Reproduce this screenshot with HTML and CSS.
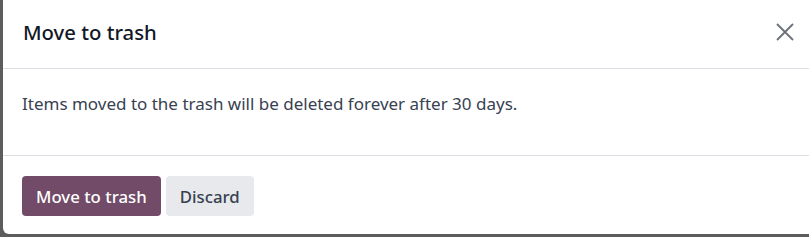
FILE: index.html
```html
<!DOCTYPE html>
<html lang="en">
<head>
    <meta charset="UTF-8">
    <meta name="viewport" content="width=device-width, initial-scale=1.0">
    <title>Move to trash</title>
    <link rel="stylesheet" href="styles.css">
</head>
<body>
    <div class="modal">
        <div class="modal-header">
            <h4 class="modal-title">Move to trash</h4>
            <button class="btn-close" aria-label="Close">
                <svg width="20" height="20" viewBox="0 0 20 20">
                    <path d="M2 2 L18 18 M18 2 L2 18" stroke="#6b6f78" stroke-width="1.8" fill="none"/>
                </svg>
            </button>
        </div>
        <div class="modal-body">
            <p>Items moved to the trash will be deleted forever after 30 days.</p>
        </div>
        <div class="modal-footer">
            <button class="btn btn-primary">Move to trash</button>
            <button class="btn btn-secondary">Discard</button>
        </div>
    </div>
</body>
</html>
```

FILE: styles.css
```css
html, body {
    margin: 0;
    height: 237px;
    overflow: hidden;
}
body {
    background: #5c5c5c;
    font-family: "Noto Sans", "Open Sans", sans-serif;
    color: #374151;
}
.modal {
    margin-left: 3px;
    height: 234px;
    background: #fff;
    border-bottom-left-radius: 6px;
    display: flex;
    flex-direction: column;
}
.modal-header {
    height: 69px;
    flex-shrink: 0;
    border-bottom: 1px solid #dcdfe4;
    display: flex;
    align-items: center;
    justify-content: space-between;
    padding: 0 14px 0 20px;
    box-sizing: border-box;
}
.modal-title {
    margin: 0;
    font-size: 20.3px;
    font-weight: 500;
    color: #111827;
    padding-bottom: 4px;
}
.btn-close {
    background: none;
    border: none;
    padding: 0;
    width: 20px;
    height: 20px;
    cursor: pointer;
    margin-bottom: 4px;
}
.modal-body {
    height: 87px;
    flex-shrink: 0;
    border-bottom: 1px solid #dcdfe4;
    padding: 0 19px;
    display: flex;
    align-items: center;
    box-sizing: border-box;
}
.modal-body p {
    margin: 0 0 18px;
    font-size: 17px;
    color: #374151;
}
.modal-footer {
    padding: 20px 19px;
    display: flex;
    gap: 5px;
}
.btn {
    height: 40px;
    border: none;
    border-radius: 4px;
    font-family: inherit;
    font-size: 16.8px;
    font-weight: 500;
    padding: 0 14px;
    cursor: pointer;
}
.btn-primary {
    background: #714b67;
    color: #fff;
}
.btn-secondary {
    background: #e7e9ed;
    color: #374151;
}
```
